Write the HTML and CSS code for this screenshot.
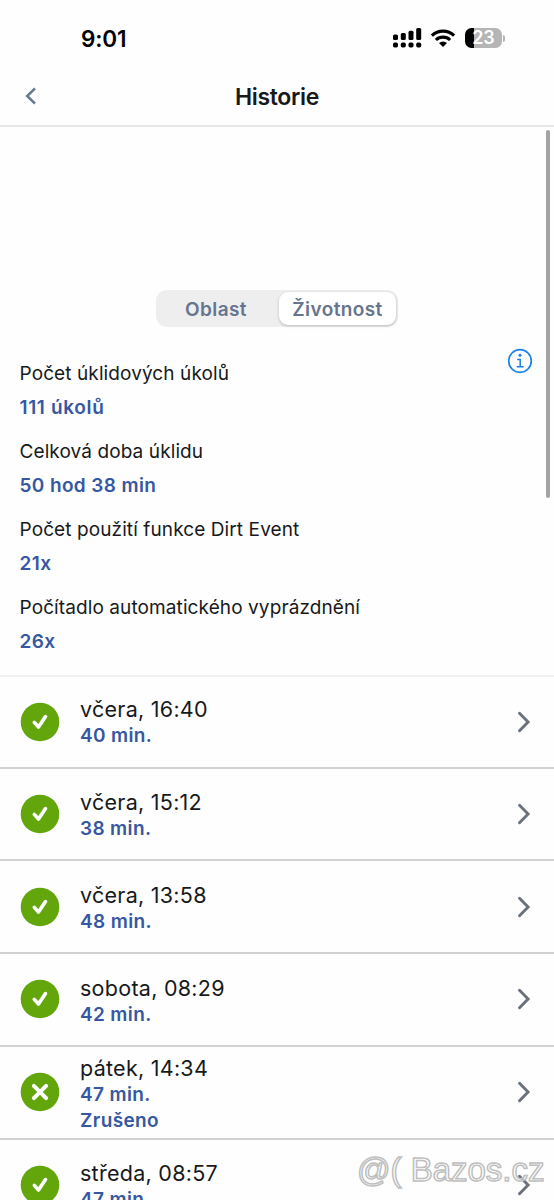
FILE: index.html
```html
<!DOCTYPE html>
<html lang="cs">
<head>
<meta charset="utf-8">
<title>Historie</title>
<link rel="stylesheet" href="styles.css">
</head>
<body>
<svg class="defs" width="0" height="0" aria-hidden="true">
  <symbol id="done" viewBox="0 0 40 40"><circle cx="20" cy="20" r="19.3" fill="#62a60c"/><path d="M14.3 20.4l4.2 4.6 7-10.4" fill="none" stroke="#fff" stroke-width="3.6" stroke-linecap="round" stroke-linejoin="round"/></symbol>
  <symbol id="cancelled" viewBox="0 0 40 40"><circle cx="20" cy="20" r="19.3" fill="#62a60c"/><path d="M13.9 13.9l12.2 12.2M26.1 13.9L13.9 26.1" stroke="#fff" stroke-width="4" stroke-linecap="round"/></symbol>
  <symbol id="next" viewBox="0 0 14 22"><path d="M2.5 2.2l8.6 8.8-8.6 8.8" fill="none" stroke="#69717b" stroke-width="2.9" stroke-linecap="round" stroke-linejoin="miter"/></symbol>
</svg>
<div class="screen">
  <div class="status">
    <span class="time">9:01</span>
    <div class="indicators">
      <svg class="signal" width="30" height="22" viewBox="0 0 30 22">
        <rect x="1" y="8.5" width="5" height="5.5" rx="1.5"/><rect x="8.8" y="7" width="5" height="7" rx="1.5"/><rect x="16.5" y="4.7" width="5" height="9.3" rx="1.5"/><rect x="24.2" y="2" width="5" height="12" rx="1.5"/>
        <rect x="1" y="16.5" width="5" height="5" rx="1.7"/><rect x="8.8" y="16.5" width="5" height="5" rx="1.7"/><rect x="16.5" y="16.5" width="5" height="5" rx="1.7"/><rect x="24.2" y="16.5" width="5" height="5" rx="1.7"/>
      </svg>
      <svg class="wifi" width="26" height="20" viewBox="0 0 26 20">
        <path d="M1.9 7.6a16 16 0 0 1 22.2 0M5.9 12a10.2 10.2 0 0 1 14.2 0" fill="none" stroke="#000" stroke-width="3.1"/><path d="M9 15a5.9 5.9 0 0 1 8 0l-4 4z"/>
      </svg>
      <div class="battery"><span>23</span></div><i class="battery-tip"></i>
    </div>
  </div>
  <header class="header">
    <svg class="back" width="12" height="20" viewBox="0 0 12 20"><path d="M10 2.3L2.2 10l7.8 7.7" fill="none" stroke="#64788f" stroke-width="2.5"/></svg>
    <h1>Historie</h1>
  </header>
  <main class="content">
    <div class="scrollbar"></div>
    <div class="segments"><div class="segment">Oblast</div><div class="segment active">Životnost</div></div>
    <section class="summary">
      <dl>
        <div><dt>Počet úklidových úkolů</dt><dd class="tasks">111 úkolů</dd></div>
        <div><dt>Celková doba úklidu</dt><dd>50 hod 38 min</dd></div>
        <div><dt>Počet použití funkce Dirt Event</dt><dd>21x</dd></div>
        <div><dt>Počítadlo automatického vyprázdnění</dt><dd>26x</dd></div>
      </dl>
      <svg class="info" width="26" height="26" viewBox="0 0 26 26"><circle cx="13" cy="13" r="11.3" fill="none" stroke="#1782e4" stroke-width="1.7"/><circle cx="13" cy="7.3" r="1.5" fill="#1782e4"/><path d="M10.2 11.4h3v7.2M9.7 18.8h7" fill="none" stroke="#1782e4" stroke-width="1.5"/></svg>
    </section>
    <ul class="history">
      <li><svg class="state"><use href="#done"/></svg><div class="entry"><b>včera, 16:40</b><span>40 min.</span></div><svg class="next"><use href="#next"/></svg></li>
      <li><svg class="state"><use href="#done"/></svg><div class="entry"><b>včera, 15:12</b><span>38 min.</span></div><svg class="next"><use href="#next"/></svg></li>
      <li><svg class="state"><use href="#done"/></svg><div class="entry"><b>včera, 13:58</b><span>48 min.</span></div><svg class="next"><use href="#next"/></svg></li>
      <li><svg class="state"><use href="#done"/></svg><div class="entry"><b>sobota, 08:29</b><span>42 min.</span></div><svg class="next"><use href="#next"/></svg></li>
      <li><svg class="state"><use href="#cancelled"/></svg><div class="entry"><b>pátek, 14:34</b><span>47 min.</span><span>Zrušeno</span></div><svg class="next"><use href="#next"/></svg></li>
      <li><svg class="state"><use href="#done"/></svg><div class="entry"><b>středa, 08:57</b><span>47 min.</span></div><svg class="next"><use href="#next"/></svg></li>
    </ul>
  </main>
  <div class="watermark">@( Bazos.cz</div>
</div>
</body>
</html>
```
FILE: styles.css
```css
* { box-sizing: border-box; }
body { margin: 0; background: #fefefe; font-family: Inter, "Liberation Sans", sans-serif; color: #17191b; }
.defs { position: absolute; }
.screen { position: relative; width: 554px; height: 1200px; overflow: hidden; display: flex; flex-direction: column; }
.status { height: 68px; flex: none; display: flex; justify-content: space-between; align-items: center; padding: 8px 49px 0 81px; }
.time { font-size: 22.5px; font-weight: 600; color: #000; letter-spacing: -.1px; }
.indicators { display: flex; align-items: center; }
.signal { margin: -3px 8px 0 0; }
.wifi { margin: -1px 9px 0 0; }
.battery { width: 37px; height: 20px; border-radius: 6.5px; background: linear-gradient(90deg, #000 8.5px, #b5b5b5 8.5px); display: flex; align-items: center; justify-content: center; color: #fff; font-size: 18px; font-weight: 600; line-height: 20px; }
.battery-tip { width: 2px; height: 7px; margin-left: 1px; border-radius: 0 3px 3px 0; background: #b5b5b5; }
.header { height: 59px; flex: none; display: grid; grid-template-columns: 60px 1fr 60px; align-items: center; border-bottom: 2px solid #e7e7e8; }
.back { margin-left: 25px; margin-top: -1px; }
h1 { margin: 0; text-align: center; font-size: 23px; font-weight: 600; letter-spacing: -.35px; }
.content { position: relative; flex: 1; min-height: 0; padding-top: 163px; }
.scrollbar { position: absolute; right: 4px; top: 3px; width: 4px; height: 368px; border-radius: 2px; background: #a3a3a4; }
.segments { display: flex; width: 242px; height: 37px; margin-left: 156px; padding: 2px; border-radius: 11px; background: #eeeeef; color: #66758d; font-size: 19px; font-weight: 600; letter-spacing: .4px; }
.segment { width: 121px; padding: 2px 5px 0 0; display: flex; align-items: center; justify-content: center; }
.segment.active { width: 117px; padding-right: 0; border-radius: 9px; background: #fff; box-shadow: 0 1px 3px rgba(0,0,0,.22); }
.summary { height: 348px; display: flex; justify-content: space-between; padding: 20px 21px 0 19.5px; }
.info { margin-top: 1px; }
dl { margin: 10px 0 0; display: flex; flex-direction: column; gap: 10px; font-size: 19px; line-height: 34px; letter-spacing: .1px; white-space: nowrap; }
dd { margin: 0; font-weight: 600; color: #3657a1; letter-spacing: .38px; }
.tasks { letter-spacing: .65px; }
.history { margin: 0; padding: 0; list-style: none; border-top: 2px solid #f1f1f2; }
li { height: 92.75px; display: flex; align-items: center; padding: 0 23px 0 20px; border-bottom: 2px solid #d0d2d4; }
li:first-child { height: 91.5px; }
.state { width: 40px; height: 40px; margin-right: 20px; }
.entry { flex: 1; display: flex; flex-direction: column; padding-top: 3px; line-height: 26px; }
.entry b { font-size: 21.5px; font-weight: 400; letter-spacing: .27px; line-height: 28px; }
li:first-child .entry { padding-top: 1px; }
.entry span { font-size: 19px; font-weight: 600; color: #3657a1; letter-spacing: .36px; }
.next { width: 14px; height: 22px; }
.watermark { position: absolute; left: 357px; top: 1151px; font: 33px/38px "Liberation Sans", sans-serif; color: rgba(255,255,255,.5); -webkit-text-stroke: 1.5px #bfbfbf; white-space: nowrap; }
```
